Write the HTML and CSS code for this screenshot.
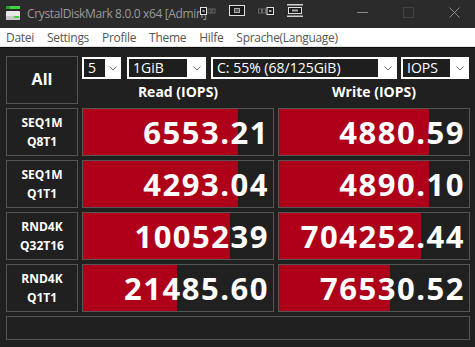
FILE: index.html
```html
<!DOCTYPE html>
<html>
<head>
<meta charset="utf-8">
<link rel="stylesheet" href="styles.css">
</head>
<body>
<div class="window">
  <div class="titlebar">
    <svg class="appicon" width="14" height="15" viewBox="0 0 14 15">
      <rect x="0" y="0" width="14" height="3" fill="#3fd43f"/>
      <rect x="0" y="0" width="4" height="3" fill="#2aa12a"/>
      <rect x="0" y="5" width="14" height="9" rx="1" fill="#e8e8e8"/>
      <rect x="0" y="10" width="14" height="4" fill="#c8c8c8"/>
      <rect x="8" y="10" width="5" height="2" fill="#3fd43f"/>
    </svg>
    <span class="title">CrystalDiskMark 8.0.0 x64 [Admin]</span>
    <div class="tbicons">
      <svg class="ic1" width="16" height="8" viewBox="0 0 16 8">
        <rect x="0.5" y="0.5" width="6" height="7" fill="#1a1a1a" stroke="#e0e0e0"/>
        <rect x="2.5" y="3" width="2" height="2" fill="#aaa"/>
        <rect x="8" y="2" width="3" height="4" fill="#2b2b2b" stroke="#666" stroke-width="1"/>
        <rect x="12" y="2" width="3" height="4" fill="#2b2b2b" stroke="#666" stroke-width="1"/>
      </svg>
      <svg width="16" height="11" viewBox="0 0 16 11">
        <rect x="0.5" y="0.5" width="15" height="10" fill="#1a1a1a" stroke="#e0e0e0"/>
        <rect x="5.5" y="3.5" width="5" height="4" fill="#555" stroke="#aaa"/>
      </svg>
      <svg width="16" height="8" viewBox="0 0 16 8">
        <rect x="0.5" y="2" width="3" height="4" fill="none" stroke="#666"/>
        <rect x="4.5" y="2" width="3" height="4" fill="none" stroke="#666"/>
        <rect x="9" y="0.5" width="6.5" height="7" fill="#1a1a1a" stroke="#e0e0e0"/>
        <rect x="11" y="3" width="2.5" height="2" fill="#aaa"/>
      </svg>
      <svg width="16" height="13" viewBox="0 0 16 13">
        <rect x="0" y="0" width="16" height="1.5" fill="#d0d0d0"/>
        <rect x="0" y="11.5" width="16" height="1.5" fill="#d0d0d0"/>
        <rect x="1.5" y="3.5" width="13" height="6" fill="#1a1a1a" stroke="#e0e0e0"/>
        <rect x="5" y="5.5" width="6" height="2" fill="#aaa"/>
      </svg>
    </div>
    <div class="wctrl">
      <svg width="11" height="11" viewBox="0 0 11 11"><line x1="0" y1="5.5" x2="11" y2="5.5" stroke="#8a8a8a" stroke-width="1"/></svg>
      <svg width="11" height="11" viewBox="0 0 11 11"><rect x="0.5" y="0.5" width="10" height="10" fill="none" stroke="#444" stroke-width="1"/></svg>
      <svg width="11" height="11" viewBox="0 0 11 11"><path d="M0.5 0.5 L10.5 10.5 M10.5 0.5 L0.5 10.5" stroke="#8a8a8a" stroke-width="1"/></svg>
    </div>
  </div>
  <div class="menubar">
    <span class="mi">Datei</span>
    <span class="mi">Settings</span>
    <span class="mi">Profile</span>
    <span class="mi">Theme</span>
    <span class="mi">Hilfe</span>
    <span class="mi">Sprache(Language)</span>
  </div>
  <div class="main">
    <div class="box allbtn">All</div>
    <div class="topright">
      <div class="selects">
        <div class="sel s1"><span class="val">5</span><span class="chev"><svg width="8" height="5" viewBox="0 0 8 5"><path d="M0.5 0.5 L4 4 L7.5 0.5" fill="none" stroke="#777"/></svg></span></div>
        <div class="sel s2"><span class="val">1GiB</span><span class="chev"><svg width="8" height="5" viewBox="0 0 8 5"><path d="M0.5 0.5 L4 4 L7.5 0.5" fill="none" stroke="#777"/></svg></span></div>
        <div class="sel s3"><span class="val">C: 55% (68/125GiB)</span><span class="chev"><svg width="8" height="5" viewBox="0 0 8 5"><path d="M0.5 0.5 L4 4 L7.5 0.5" fill="none" stroke="#777"/></svg></span></div>
        <div class="sel s4"><span class="val">IOPS</span><span class="chev"><svg width="8" height="5" viewBox="0 0 8 5"><path d="M0.5 0.5 L4 4 L7.5 0.5" fill="none" stroke="#777"/></svg></span></div>
      </div>
      <div class="heads">
        <div class="head">Read (IOPS)</div>
        <div class="head">Write (IOPS)</div>
      </div>
    </div>

    <div class="box label">SEQ1M<br>Q8T1</div>
    <div class="box val-cell" style="--p:155px">6553.21</div>
    <div class="box val-cell" style="--p:150px">4880.59</div>

    <div class="box label">SEQ1M<br>Q1T1</div>
    <div class="box val-cell" style="--p:155px">4293.04</div>
    <div class="box val-cell" style="--p:150px">4890.10</div>

    <div class="box label">RND4K<br>Q32T16</div>
    <div class="box val-cell" style="--p:147px">1005239</div>
    <div class="box val-cell" style="--p:142px">704252.44</div>

    <div class="box label">RND4K<br>Q1T1</div>
    <div class="box val-cell" style="--p:94px">21485.60</div>
    <div class="box val-cell" style="--p:111px">76530.52</div>

    <div class="box status"></div>
  </div>
</div>
</body>
</html>
```

FILE: styles.css
```css
* { box-sizing: border-box; }
html, body { margin: 0; padding: 0; }
body {
  width: 475px;
  height: 347px;
  background: #202020;
  font-family: "Open Sans", "Noto Sans", sans-serif;
  overflow: hidden;
}
.window { width: 475px; height: 347px; background: #202020; }

.titlebar {
  height: 28px;
  background: #2b2b2b;
  display: flex;
  align-items: center;
  position: relative;
}
.appicon { margin-left: 6px; margin-top: -1px; flex: none; }
.title {
  margin-left: 7px;
  white-space: nowrap;
  color: #9a9a9a;
  font-size: 12px;
  letter-spacing: -0.35px;
  flex: none;
  margin-top: -2px;
}
.tbicons {
  position: absolute;
  left: 200px;
  top: 4px;
  height: 13px;
  display: flex;
  align-items: center;
  gap: 13px;
}
.ic1 { background: #2b2b2b; }
.wctrl {
  margin-left: auto;
  display: flex;
  align-items: center;
  gap: 35px;
  margin-right: 15px;
  margin-top: -3px;
}

.menubar {
  height: 19px;
  background: #ffffff;
  border-bottom: 1px solid #e4e4e4;
  display: flex;
  align-items: center;
  padding-left: 6px;
  gap: 13px;
}
.mi { font-size: 12px; color: #555; letter-spacing: -0.3px; }

.main {
  padding: 8px 6px 0 6px;
  display: grid;
  grid-template-columns: 72px 192px 192px;
  grid-template-rows: 48px 48px 48px 48px 48px 24px;
  column-gap: 4px;
  row-gap: 4px;
  border-top: 1px solid #0e0e0e;
}
.box {
  border: 1px solid #555;
  color: #fff;
}
.allbtn {
  display: flex;
  align-items: center;
  justify-content: center;
  font-weight: 700;
  font-size: 16px;
  padding-bottom: 2px;
}
.topright {
  grid-column: 2 / 4;
  display: flex;
  flex-direction: column;
}
.selects { display: flex; margin-top: 1px; height: 22px; }
.sel {
  height: 22px;
  background: #fff;
  padding: 2px 0 2px 2px;
  display: flex;
}
.sel .val {
  flex: 1;
  background: #1e1e1e;
  color: #fff;
  font-size: 14px;
  line-height: 18px;
  padding-left: 4px;
  white-space: nowrap;
  overflow: hidden;
}
.sel .chev {
  width: 19px;
  display: flex;
  align-items: center;
  justify-content: center;
}
.s1 { width: 39px; }
.s1 .chev { width: 16px; }
.s2 { width: 79px; margin-left: 6px; }
.s3 { width: 186px; margin-left: 5px; }
.s4 { width: 68px; margin-left: 4px; }

.heads {
  display: grid;
  grid-template-columns: 192px 192px;
  column-gap: 4px;
  flex: 1;
}
.head {
  text-align: center;
  color: #fff;
  font-weight: 700;
  font-size: 14px;
  line-height: 20px;
  padding-top: 3px;
}

.label {
  display: flex;
  align-items: center;
  justify-content: center;
  text-align: center;
  font-weight: 700;
  font-size: 12px;
  line-height: 19px;
}
.val-cell {
  background: linear-gradient(to right, #ae0019 var(--p), transparent var(--p));
  display: flex;
  align-items: center;
  justify-content: flex-end;
  font-weight: 700;
  font-size: 31px;
  letter-spacing: 1.5px;
  padding-right: 4px;
  white-space: nowrap;
}
.status { grid-column: 1 / 4; }
```
